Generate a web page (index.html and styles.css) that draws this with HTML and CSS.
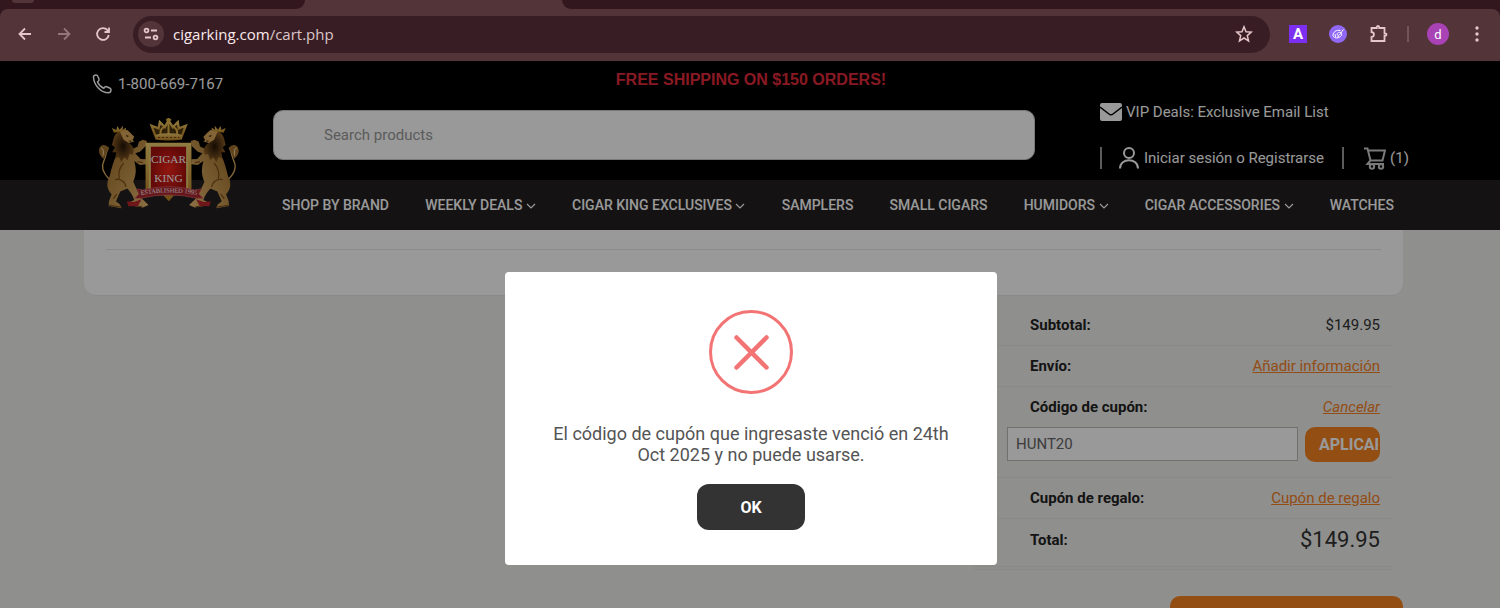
FILE: index.html
```html
<!DOCTYPE html>
<html lang="es">
<head>
    <meta charset="UTF-8">
    <meta name="viewport" content="width=device-width, initial-scale=1">
    <title>Cigar King - Carrito</title>
    <link rel="stylesheet" href="styles.css">
</head>
<body>
    <!-- browser bar -->
    <div class="browser">
        <div class="tabs">
            <div class="tabs-left"><span class="tab-search"></span></div>
            <div class="tabs-right"></div>
        </div>
        <div class="toolbar">
            <button class="tool" aria-label="Atrás">
                <svg width="16" height="16" viewBox="0 0 16 16"><path d="M14 8H3M8 2.500L2.500 8L8 13.500"/></svg>
            </button>
            <button class="tool off" aria-label="Adelante">
                <svg width="16" height="16" viewBox="0 0 16 16"><path d="M2 8H13M8 2.500L13.500 8L8 13.500"/></svg>
            </button>
            <button class="tool" aria-label="Recargar">
                <svg width="16" height="16" viewBox="0 0 16 16"><path d="M13.800 9A5.900 5.900 0 1 1 12.500 4.200L13.800 5.600M14 1.500V6H9.500"/></svg>
            </button>
            <div class="address">
                <button class="site-info" aria-label="Información del sitio">
                    <svg width="16" height="16" viewBox="0 0 16 16"><circle cx="3.500" cy="4.500" r="1.900"/><path d="M8 4.500H14M2 11.500H8"/><circle cx="12.500" cy="11.500" r="1.900"/></svg>
                </button>
                <span class="url"><b>cigarking.com</b>/cart.php</span>
                <button class="star" aria-label="Marcador">
                    <svg width="18" height="18" viewBox="0 0 18 18"><path d="M9 1.800L11 6.700L16.300 7.100L12.300 10.600L13.500 15.800L9 13L4.500 15.800L5.700 10.600L1.700 7.100L7 6.700Z"/></svg>
                </button>
            </div>
            <div class="extensions">
                <button class="ext-a" aria-label="Extensión A">A</button>
                <button class="ext-b" aria-label="Extensión">
                    <svg width="18" height="18" viewBox="0 0 18 18"><circle cx="9" cy="9" r="9"/><path d="M11.500 5.500C7 4.500 4 7.500 4 10.200C4 13 8.500 14 11.500 11.500C14 9.400 12 6.500 9.500 7.500C7.500 8.300 7.600 10.500 9.500 10.300C11.500 10 12 7 14.500 4.500M6 9L6.500 12M8.500 11.500L10 12"/></svg>
                </button>
                <button class="ext-puzzle" aria-label="Extensiones">
                    <svg width="20" height="20" viewBox="0 0 20 20"><path d="M2.500 4H7.800V3.200A1.200 1.200 0 0 1 10.200 3.200V4H15.500V9.300H16.300A1.200 1.200 0 0 1 16.300 11.700H15.500V17H2.500V13A2.400 2.400 0 0 0 2.500 8.200Z"/></svg>
                </button>
                <span class="split"></span>
                <button class="avatar" aria-label="Perfil">d</button>
                <button class="more" aria-label="Menú">
                    <svg width="4" height="18" viewBox="0 0 4 18"><circle cx="2" cy="3" r="1.700"/><circle cx="2" cy="9" r="1.700"/><circle cx="2" cy="15" r="1.700"/></svg>
                </button>
            </div>
        </div>
    </div>

    <div class="site">
        <header>
            <div class="header-left">
                <a class="phone" href="#">
                    <svg width="20" height="20" viewBox="0 0 20 20"><path d="M1.500 3.200C1.200 1.700 2.500 1 4 1C5 1 5.500 1.300 5.800 2.200L7 5.300C7.300 6.200 7 6.700 6.300 7.300L5.500 8C6.700 10.800 9 13 11.800 14.300L12.600 13.300C13.200 12.600 13.800 12.400 14.600 12.700L17.700 14C18.700 14.400 19 15 19 16C18.900 17.700 18 18.800 16.500 18.800C9 18.800 1.800 11 1.500 3.200Z"/></svg>
                    1-800-669-7167
                </a>
                <a class="logo" href="#" aria-label="Cigar King">
                    <svg width="141" height="92" viewBox="55 157 424 276">
                        <defs>
                            <linearGradient id="gold" x1="0" y1="0" x2="0" y2="1">
                                <stop offset="0" stop-color="#f4cf6c"/>
                                <stop offset="1" stop-color="#b98022"/>
                            </linearGradient>
                            <linearGradient id="fur" x1="0" y1="0" x2="1" y2="1">
                                <stop offset="0" stop-color="#9b6a25"/>
                                <stop offset="1" stop-color="#e9bb72"/>
                            </linearGradient>
                            <radialGradient id="mane">
                                <stop offset="0" stop-color="#241306"/>
                                <stop offset="1" stop-color="#8f6026"/>
                            </radialGradient>
                            <radialGradient id="red">
                                <stop offset="0" stop-color="#f5261c"/>
                                <stop offset="1" stop-color="#a5120f"/>
                            </radialGradient>
                            <path id="ribbonline" d="M172 391Q268 370 364 391"/>
                            <g id="lion">
                                <path d="M88 340C66 318 65 300 73 285C80 270 80 252 87 246" fill="none" stroke="#dfae60" stroke-width="4"/>
                                <path d="M88 248C76 230 58 238 58 255C58 268 68 276 72 280C77 264 84 258 88 248Z" fill="#9e712f"/>
                                <path d="M64 247C72 248 72 260 70 270" fill="none" stroke="#ffe0a4" stroke-width="3"/>
                                <path d="M111 268C100 288 95 312 90 332C80 350 80 370 96 386L88 407L87 421L126 428L121 417L109 407L122 378L143 369C153 380 160 391 164 403L150 410L153 420L190 426L207 418L182 394C176 378 168 364 161 348C171 326 170 307 164 286L181 298L201 296L200 281L183 280L167 263L181 258L199 241L202 226L190 222L178 228L174 242L154 252Z" fill="url(#fur)"/>
                                <path d="M102 218C108 198 125 190 141 195C153 198 157 207 164 215L158 225L148 231C163 242 167 256 158 268L150 264L144 284L134 275L125 290L118 274L107 279L110 260L98 260L106 245L97 238Z" fill="url(#mane)"/>
                                <path d="M120 196L143 193L164 213L158 222L164 227L148 232L132 222Z" fill="#dba75a"/>
                                <path d="M139 208L149 211L142 214ZM154 224L145 226L156 229Z" fill="#352009"/>
                                <path d="M103 201L97 187L110 193L113 181L120 192L130 180L129 192L139 186L139 195Z" fill="url(#gold)"/>
                                <path d="M132 292C121 304 115 321 119 340M106 342C121 337 137 349 139 364M112 385L101 400M174 288L190 291" fill="none" stroke="#805119" stroke-width="4"/>
                                <path d="M89 419L126 425M155 418L188 424" stroke="#704617" stroke-width="3"/>
                                <path d="M142 407L163 409L186 401L175 421L146 422Z" fill="#b8262c"/>
                            </g>
                        </defs>
                        <use href="#lion"/>
                        <use href="#lion" transform="translate(536 0) scale(-1 1)"/>
                        <path d="M228 212L216 180L237 188L241 169L256 184L267 164L280 184L295 169L298 188L319 180L307 212Z" fill="#4d3510" stroke="url(#gold)" stroke-width="7"/>
                        <path d="M244 212Q239 189 254 184M292 212Q297 189 282 184M267 164V212M260 162H275M267 157V169" fill="none" stroke="#e5b447" stroke-width="6"/>
                        <path d="M227 207Q267 198 308 207V221Q267 228 227 221Z" fill="url(#gold)"/>
                        <path d="M235 215H300" stroke="#7d3515" stroke-width="3" stroke-dasharray="7 5"/>
                        <path d="M198 231H336V389H284L268 407L251 389H198Z" fill="url(#gold)"/>
                        <rect x="208" y="238" width="118" height="144" fill="#e8ca70"/>
                        <rect x="214" y="243" width="106" height="140" fill="url(#red)"/>
                        <text x="267" y="292" class="logo-name">CIGAR</text>
                        <text x="267" y="348" class="logo-name">KING</text>
                        <path d="M171 370L190 373Q268 353 346 373L366 370L358 385L371 398L354 398Q268 378 183 398L166 398L178 385Z" fill="#ac272f" stroke="#d66466"/>
                        <text class="logo-ribbon"><textPath href="#ribbonline" startOffset="50%">ESTABLISHED 1995</textPath></text>
                    </svg>
                </a>
            </div>
            <div class="header-mid">
                <p class="promo">FREE SHIPPING ON $150 ORDERS!</p>
                <input class="search" type="search" placeholder="Search products" aria-label="Search products">
            </div>
            <div class="header-right">
                <a class="vip" href="#">
                    <svg width="22" height="18" viewBox="0 0 22 18"><rect width="22" height="18" rx="2" fill="#fff"/><path d="M0 4L9 11Q11 12.500 13 11L22 4" fill="none" stroke="#000" stroke-width="1.500"/></svg>
                    VIP Deals: Exclusive Email List
                </a>
                <div class="account">
                    <span class="user">
                        <svg width="20" height="22" viewBox="0 0 20 22"><circle cx="10" cy="6" r="5"/><path d="M1 21.500C1 10.500 19 10.500 19 21.500"/></svg>
                        <span><a href="#">Iniciar sesión</a> o <a href="#">Registrarse</a></span>
                    </span>
                    <a class="cart" href="#">
                        <svg width="22" height="23" viewBox="0 0 22 23"><path d="M0 1.500H3.500L6.500 13.500H18.500L21 3.500H4M6.500 13.500L3.500 17H20"/><circle cx="8" cy="19.500" r="2.200"/><circle cx="17" cy="19.500" r="2.200"/></svg>
                        (1)
                    </a>
                </div>
            </div>
        </header>

        <nav>
            <a href="#">SHOP BY BRAND</a>
            <a href="#">WEEKLY DEALS <svg class="chevron" width="10" height="6" viewBox="0 0 10 6"><path d="M1 1L5 5L9 1"/></svg></a>
            <a href="#">CIGAR KING EXCLUSIVES <svg class="chevron" width="10" height="6" viewBox="0 0 10 6"><path d="M1 1L5 5L9 1"/></svg></a>
            <a href="#">SAMPLERS</a>
            <a href="#">SMALL CIGARS</a>
            <a href="#">HUMIDORS <svg class="chevron" width="10" height="6" viewBox="0 0 10 6"><path d="M1 1L5 5L9 1"/></svg></a>
            <a href="#">CIGAR ACCESSORIES <svg class="chevron" width="10" height="6" viewBox="0 0 10 6"><path d="M1 1L5 5L9 1"/></svg></a>
            <a href="#">WATCHES</a>
        </nav>

        <main>
            <div class="cart-card"><hr></div>

            <ul class="totals">
                <li><strong>Subtotal:</strong><span>$149.95</span></li>
                <li><strong>Envío:</strong><a href="#">Añadir información</a></li>
                <li class="coupon">
                    <label for="coupon">Código de cupón:</label><a class="cancel" href="#">Cancelar</a>
                    <form>
                        <input type="text" id="coupon" value="HUNT20">
                        <button type="submit">APLICAR</button>
                    </form>
                </li>
                <li><strong>Cupón de regalo:</strong><a href="#">Cupón de regalo</a></li>
                <li class="total"><strong>Total:</strong><span>$149.95</span></li>
            </ul>

            <button class="checkout" aria-label="Pagar"></button>
        </main>

        <div class="overlay">
            <div class="modal" role="dialog" aria-modal="true" aria-labelledby="modalText">
                <svg width="84" height="84" viewBox="0 0 84 84"><circle cx="42" cy="42" r="40.500" stroke-width="3"/><path d="M27.500 27.500L57.500 57.500M57.500 27.500L27.500 57.500" stroke-width="4.500"/></svg>
                <p id="modalText">El código de cupón que ingresaste venció en 24th Oct 2025 y no puede usarse.</p>
                <button type="button">OK</button>
            </div>
        </div>
    </div>
</body>
</html>
```
FILE: styles.css
```css
* {
    box-sizing: border-box;
}

body {
    display: flex;
    flex-direction: column;
    height: 100vh;
    margin: 0;
    overflow: hidden;
    font-family: Roboto, "Liberation Sans", sans-serif;
    font-size: 15px;
    color: #333;
}

button {
    border: none;
    padding: 0;
    background: none;
    font-family: inherit;
    cursor: pointer;
}

p {
    margin: 0;
}

/* browser bar */
.browser {
    background: #32181e;
}

.tabs {
    display: flex;
    justify-content: space-between;
    height: 9px;
    background: #523439;
}

.tabs-left {
    width: 305px;
    padding-left: 12px;
    background: #32181e;
    border-bottom-right-radius: 10px;
}

.tab-search {
    display: block;
    width: 22px;
    height: 3px;
    background: #523439;
    border-radius: 0 0 6px 6px;
}

.tabs-right {
    width: calc(100% - 562px);
    background: #32181e;
    border-bottom-left-radius: 10px;
}

.toolbar {
    display: flex;
    align-items: center;
    height: 52px;
    padding: 0 21px 2px 17px;
    background: #523439;
    border-radius: 8px 8px 0 0;
}

.toolbar svg {
    display: block;
    fill: none;
    stroke: #e6c6ca;
    stroke-width: 1.8px;
}

.tool {
    margin-right: 23px;
}

.tool.off {
    opacity: 0.45;
}

.address {
    display: flex;
    align-items: center;
    flex: 1;
    height: 37px;
    margin-left: -1px;
    padding: 0 17px 0 5px;
    background: #381e24;
    border-radius: 19px;
}

.site-info {
    padding: 5px;
    background: #523439;
    border-radius: 50%;
}

.url {
    flex: 1;
    margin-left: 9px;
    font-family: "Open Sans", "Noto Sans", sans-serif;
    font-size: 15px;
    color: #dcc6c9;
}

.url b {
    font-weight: 400;
    color: #fbe9eb;
}

.toolbar .star svg {
    stroke-width: 1.5px;
}

.extensions {
    display: flex;
    align-items: center;
    margin-left: 19px;
}

.ext-a {
    width: 18px;
    height: 18px;
    margin-right: 22px;
    background: #7c2ff0;
    color: #fff;
    font-size: 15px;
    font-weight: 700;
    line-height: 18px;
}

.toolbar .ext-b svg {
    fill: #9068f5;
    stroke: none;
}

.toolbar .ext-b path {
    fill: none;
    stroke: #fff;
    stroke-width: 1px;
}

.ext-puzzle {
    margin-left: 22px;
}

.split {
    width: 2px;
    height: 16px;
    margin: 0 18px;
    background: #74545a;
}

.avatar {
    width: 22px;
    height: 22px;
    background: #a842b5;
    border-radius: 50%;
    color: #fff;
    font-size: 13px;
}

.more {
    margin-left: 26px;
}

.toolbar .more svg {
    fill: #e6c6ca;
    stroke: none;
}

/* header */
.site {
    position: relative;
    flex: 1;
    overflow: hidden;
    background: #eeeeeb;
}

header {
    display: flex;
    height: 119px;
    padding: 0 84px;
    background: #000;
}

header a {
    color: #fff;
    text-decoration: none;
}

header svg {
    flex: none;
    fill: none;
    stroke: #fff;
    stroke-width: 2;
}

.header-left {
    position: relative;
    width: 189px;
    padding: 13px 0 0 8px;
}

.phone {
    display: flex;
    align-items: center;
    gap: 6px;
}

.phone svg {
    stroke-width: 1.5px;
}

/* the crest hangs over the nav bar */
.logo {
    position: absolute;
    top: 57px;
    left: 14px;
}

.logo svg {
    stroke: none;
}

.logo-name {
    fill: #fff;
    font-family: "Liberation Serif", serif;
    font-size: 34px;
    text-anchor: middle;
}

.logo-ribbon {
    fill: #fff;
    font-family: "Liberation Serif", serif;
    font-size: 19px;
    text-anchor: middle;
}

.header-mid {
    flex: 1;
    padding-top: 9px;
}

.promo {
    margin: 0 -97px 0 97px;
    color: #e32b3b;
    font-family: "Liberation Sans", sans-serif;
    font-size: 16px;
    font-weight: 700;
    line-height: 20px;
    text-align: center;
}

.search {
    display: block;
    width: 100%;
    height: 50px;
    margin-top: 20px;
    padding: 0 50px;
    background: #fff;
    border: 1px solid #ccc;
    border-radius: 10px;
    font-family: inherit;
    font-size: 15px;
}

.search::placeholder {
    color: #999;
}

.header-right {
    width: 324px;
    margin: 0 -8px 0 65px;
    padding-top: 41px;
}

.vip {
    display: flex;
    align-items: center;
    gap: 4px;
    height: 20px;
}

.vip svg {
    stroke: none;
}

.account {
    display: flex;
    align-items: center;
    height: 24px;
    margin-top: 24px;
    color: #fff;
}

.user {
    display: flex;
    align-items: center;
    gap: 5px;
    height: 22px;
    padding: 0 18px 0 17px;
    border: solid #999;
    border-width: 0 2px;
    white-space: nowrap;
}

.cart {
    display: flex;
    align-items: center;
    gap: 4px;
    margin-left: 20px;
}

.cart svg {
    stroke: #ccc;
}

nav {
    display: flex;
    align-items: center;
    justify-content: space-between;
    height: 50px;
    padding: 0 106px 1px 282px;
    background: #231f20;
}

nav a {
    color: #fff;
    font-size: 14px;
    font-weight: 500;
    text-decoration: none;
    white-space: nowrap;
}

.chevron {
    vertical-align: 1px;
    fill: none;
    stroke: #fff;
    stroke-width: 1.2px;
}

/* cart */
main {
    padding: 0 97px 0 84px;
}

.cart-card {
    height: 66px;
    padding: 19px 22px;
    background: #fff;
    border-bottom: 1px solid #e6e6e4;
    border-radius: 0 0 12px 12px;
}

.cart-card hr {
    margin: 0;
    border: none;
    border-top: 1px solid #e6e6e6;
}

.totals {
    width: 418px;
    margin: 9px 11px 0 auto;
    padding: 0 0 2px;
    list-style: none;
    border-bottom: 1px solid #e5e5e3;
}

.totals li {
    display: flex;
    align-items: center;
    justify-content: space-between;
    flex-wrap: wrap;
    height: 41px;
    padding: 0 12px 0 56px;
    border-bottom: 1px solid #e5e5e3;
}

.totals strong,
.totals label {
    font-weight: 700;
    color: #222;
}

.totals a {
    color: #f58025;
    text-decoration: underline;
}

.totals .cancel {
    font-style: italic;
}

.totals .coupon {
    align-content: flex-start;
    height: 91px;
}

.coupon label,
.coupon .cancel {
    line-height: 40px;
}

.coupon form {
    display: flex;
    gap: 7px;
    width: calc(100% + 23px);
    margin-left: -23px;
}

.coupon input {
    flex: 1;
    min-width: 0;
    height: 34px;
    padding: 0 8px;
    background: #fff;
    border: 1px solid #bbb;
    font-family: inherit;
    font-size: 15px;
    color: #666;
}

.coupon button {
    width: 75px;
    height: 35px;
    padding-left: 14px;
    overflow: hidden;
    background: #f58220;
    border-right: 2px solid #f58220;
    border-radius: 10px;
    color: #fff;
    font-size: 16px;
    font-weight: 700;
    text-align: left;
}

.totals .total {
    height: 48px;
    padding-bottom: 6px;
}

.total span {
    font-size: 22px;
}

.checkout {
    display: block;
    width: 233px;
    height: 50px;
    margin: 26px 0 0 auto;
    background: #f58220;
    border-radius: 10px;
}

/* modal */
.overlay {
    position: absolute;
    inset: 0;
    display: flex;
    align-items: flex-start;
    justify-content: center;
    padding: 211px 0 0 2px;
    background: rgba(0, 0, 0, 0.4);
}

.modal {
    display: flex;
    flex-direction: column;
    align-items: center;
    width: 492px;
    padding: 38px 48px 35px;
    background: #fff;
    border-radius: 4px;
}

.modal svg {
    fill: none;
    stroke: #f27474;
    stroke-linecap: round;
}

.modal p {
    margin: 29px 0 19px;
    color: #545454;
    font-size: 18px;
    line-height: 21px;
    text-align: center;
}

.modal button {
    width: 108px;
    height: 46px;
    background: #333;
    border-radius: 12px;
    color: #fff;
    font-size: 16px;
    font-weight: 700;
}
```
